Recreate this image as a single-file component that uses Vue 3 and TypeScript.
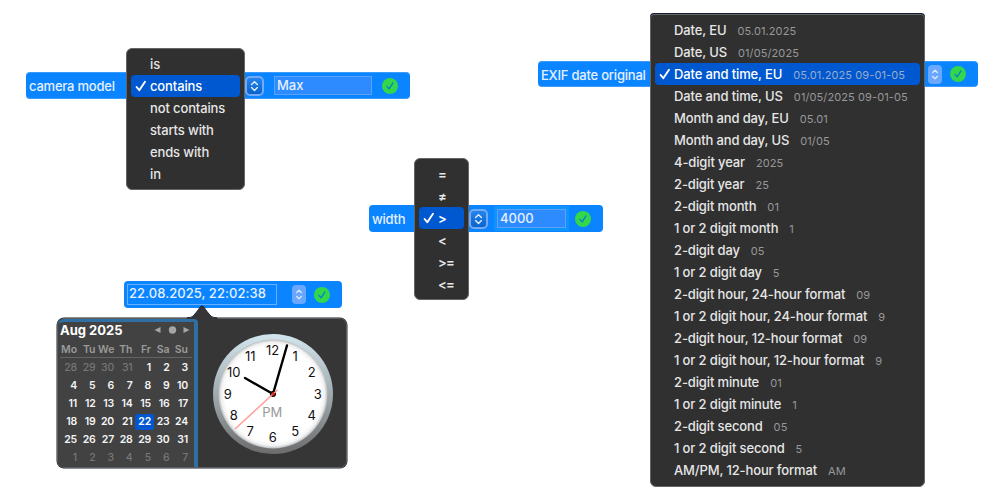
<script setup lang="ts">
interface MenuItem {
  label: string
  sample?: string
  checked?: boolean
}

interface Numeral {
  value: number
  x: number
  y: number
}

const matchItems: MenuItem[] = [
  { label: 'is' },
  { label: 'contains', checked: true },
  { label: 'not contains' },
  { label: 'starts with' },
  { label: 'ends with' },
  { label: 'in' },
]

const compareItems: MenuItem[] = [
  { label: '=' },
  { label: '≠' },
  { label: '>', checked: true },
  { label: '<' },
  { label: '>=' },
  { label: '<=' },
]

const formatItems: MenuItem[] = [
  { label: 'Date, EU', sample: '05.01.2025' },
  { label: 'Date, US', sample: '01/05/2025' },
  { label: 'Date and time, EU', sample: '05.01.2025 09-01-05', checked: true },
  { label: 'Date and time, US', sample: '01/05/2025 09-01-05' },
  { label: 'Month and day, EU', sample: '05.01' },
  { label: 'Month and day, US', sample: '01/05' },
  { label: '4-digit year', sample: '2025' },
  { label: '2-digit year', sample: '25' },
  { label: '2-digit month', sample: '01' },
  { label: '1 or 2 digit month', sample: '1' },
  { label: '2-digit day', sample: '05' },
  { label: '1 or 2 digit day', sample: '5' },
  { label: '2-digit hour, 24-hour format', sample: '09' },
  { label: '1 or 2 digit hour, 24-hour format', sample: '9' },
  { label: '2-digit hour, 12-hour format', sample: '09' },
  { label: '1 or 2 digit hour, 12-hour format', sample: '9' },
  { label: '2-digit minute', sample: '01' },
  { label: '1 or 2 digit minute', sample: '1' },
  { label: '2-digit second', sample: '05' },
  { label: '1 or 2 digit second', sample: '5' },
  { label: 'AM/PM, 12-hour format', sample: 'AM' },
]

const menus = [
  { name: 'match', items: matchItems },
  { name: 'compare', items: compareItems },
  { name: 'format', items: formatItems },
]

const weekdays: string[] = ['Mo', 'Tu', 'We', 'Th', 'Fr', 'Sa', 'Su']

// Six weeks starting on Monday, July 28
const days = Array.from({ length: 42 }, (_, i) => {
  const date = new Date(2025, 6, 28 + i)
  return {
    day: date.getDate(),
    outside: date.getMonth() !== 7,
    selected: date.getMonth() === 7 && date.getDate() === 22,
  }
})

const numerals: Numeral[] = Array.from({ length: 12 }, (_, i) => {
  const angle = ((i + 1) * Math.PI) / 6
  return { value: i + 1, x: 59.7 + 45 * Math.sin(angle), y: 60 - 43.2 * Math.cos(angle) + 4.6 }
})
</script>

<template>
  <main class="canvas">
    <section class="bar bar-model">
      <span class="bar-label">camera model</span>
      <span class="chooser"><svg viewBox="0 0 18 18"><path d="M5.5 7.3 9 3.8l3.5 3.500M5.500 10.900l3.500 3.500 3.500-3.500" /></svg></span>
      <span class="field">Max</span>
      <svg class="ok" viewBox="0 0 16 16"><circle cx="8" cy="8" r="8" /><path d="m4.9 8.3 2.2 2.6 3.9-6" /></svg>
    </section>

    <section class="bar bar-width">
      <span class="bar-label">width</span>
      <span class="chooser"><svg viewBox="0 0 18 18"><path d="M5.5 7.3 9 3.8l3.5 3.500M5.500 10.900l3.500 3.500 3.500-3.500" /></svg></span>
      <span class="field focused">4000</span>
      <svg class="ok" viewBox="0 0 16 16"><circle cx="8" cy="8" r="8" /><path d="m4.9 8.3 2.2 2.6 3.9-6" /></svg>
    </section>

    <section class="bar bar-exif">
      <span class="bar-label">EXIF date original</span>
      <span class="stepper"><svg viewBox="0 0 14 19"><path d="M4.7 7.5 7 5.2l2.3 2.3M4.7 11.500 7 13.800l2.300-2.300" /></svg></span>
      <svg class="ok" viewBox="0 0 16 16"><circle cx="8" cy="8" r="8" /><path d="m4.9 8.3 2.2 2.6 3.9-6" /></svg>
    </section>

    <section class="bar bar-date">
      <span class="date-field">22.08.2025, 22:02:38</span>
      <span class="stepper"><svg viewBox="0 0 14 19"><path d="M4.7 7.5 7 5.2l2.3 2.3M4.7 11.500 7 13.800l2.300-2.300" /></svg></span>
      <svg class="ok" viewBox="0 0 16 16"><circle cx="8" cy="8" r="8" /><path d="m4.9 8.3 2.2 2.6 3.9-6" /></svg>
    </section>

    <ul v-for="menu in menus" :key="menu.name" class="menu" :class="`menu-${menu.name}`">
      <li v-for="item in menu.items" :key="item.label" class="item" :class="{ checked: item.checked }">
        <span class="mark">
          <svg v-if="item.checked" viewBox="0 0 12 12"><path d="M1.6 7 4.3 10.2 10 1.7" /></svg>
        </span>
        <span class="label">{{ item.label }}</span>
        <span v-if="item.sample" class="sample">{{ item.sample }}</span>
      </li>
    </ul>

    <section class="popover">
      <svg class="arrow" viewBox="0 0 32 14">
        <path class="arrow-fill" d="M0 13.5C7 13.5 8 10 11 6.5 13.5 3.5 14 1 16 1s2.5 2.5 5 5.5C24 10 25 13.5 32 13.5V14H0Z" />
        <path class="arrow-line" d="M1 12.8C7 12.8 8 10 11 6.5 13.5 3.5 14 1 16 1s2.5 2.5 5 5.5C24 10 25 12.8 31 12.8" />
      </svg>
      <div class="calendar">
        <header class="cal-head">
          <span class="month">Aug 2025</span>
          <svg class="nav" viewBox="0 0 36 8">
            <path d="M6.5 1v6L.5 4ZM29.5 1v6l6-3Z" />
            <circle cx="18.5" cy="4" r="3.7" />
          </svg>
        </header>
        <div class="grid weekdays">
          <span v-for="name in weekdays" :key="name">{{ name }}</span>
        </div>
        <div class="grid days">
          <span v-for="(d, i) in days" :key="i" :class="{ outside: d.outside, selected: d.selected }">{{ d.day }}</span>
        </div>
      </div>
      <div class="clock-pane">
        <svg class="clock" viewBox="0 0 120 120">
          <defs>
            <linearGradient id="rim" x1="0" y1="0" x2="0" y2="1">
              <stop offset="0" stop-color="#d3e6ee" />
              <stop offset="0.5" stop-color="#a0abb0" />
              <stop offset="1" stop-color="#6c6c6c" />
            </linearGradient>
            <radialGradient id="face">
              <stop offset="0.88" stop-color="#ffffff" />
              <stop offset="0.95" stop-color="#f1f1f1" />
              <stop offset="1" stop-color="#b9bcbe" />
            </radialGradient>
          </defs>
          <circle cx="60" cy="60" r="60" fill="url(#rim)" />
          <circle cx="60" cy="60" r="54.5" fill="url(#face)" />
          <text v-for="n in numerals" :key="n.value" class="numeral" :x="n.x" :y="n.y">{{ n.value }}</text>
          <text class="meridiem" x="59.3" y="83.3">PM</text>
          <path class="hand" d="M60 60 32 44" />
          <path class="hand" d="M60 60 74 11.5" />
          <circle cx="60" cy="60" r="3" fill="#000" />
          <path class="second" d="M64.5 56 22 95" />
          <circle cx="60" cy="60" r="1.8" fill="#e22c1c" />
        </svg>
      </div>
    </section>
  </main>
</template>

<style>
body {
  margin: 0;
  background: #fff;
}
</style>

<style scoped>
.canvas {
  position: relative;
  width: 1000px;
  height: 500px;
  overflow: hidden;
  background: #fff;
  font-family: Inter, "Liberation Sans", sans-serif;
  font-size: 13px;
  font-weight: 500;
}

.bar {
  position: absolute;
  display: flex;
  align-items: center;
  box-sizing: border-box;
  height: 27px;
  border-radius: 4px;
  background: #0a84ff;
  color: #e6f0ff;
  white-space: nowrap;
}

.bar-label { flex: none; letter-spacing: -0.22px; }

.bar-model {
  left: 26px;
  top: 72px;
  width: 384px;
  padding-left: 3px;
  border: 1px solid #3b9bff;
  border-left: 0;
  border-right: 0;
}
.bar-model .bar-label { width: 216px; padding-top: 1px; }
.bar-model .field { width: 98px; margin-left: 10px; }
.bar-model .ok { margin-left: 10px; }

.bar-width { left: 369px; top: 205px; width: 234px; padding-left: 3px; }
.bar-width .bar-label { width: 97px; }
.bar-width .field { width: 69px; margin-left: 9px; }
.bar-width .ok { margin-left: 9px; }

.bar-exif { left: 538px; top: 61px; width: 440px; height: 26px; padding-left: 3px; border: 1px solid #3b9bff; border-left: 0; border-right: 0; }
.bar-exif .bar-label { width: 387px; padding-top: 1px; }
.bar-exif .ok { margin-left: 8px; }

.bar-date { left: 124px; top: 281px; width: 218px; padding-left: 3px; }
.bar-date .stepper { margin-left: 15px; }
.bar-date .ok { margin-left: 8px; }

.chooser {
  flex: none;
  box-sizing: border-box;
  width: 19px;
  height: 20px;
  border: 2px solid #73a9f6;
  border-radius: 5px;
  background: linear-gradient(#2484ee, #0a63cc);
}
.chooser svg { display: block; width: 15px; height: 16px; }
.chooser path, .stepper path {
  fill: none;
  stroke: #e8f2ff;
  stroke-width: 1.6;
  stroke-linecap: round;
  stroke-linejoin: round;
}
.stepper path { stroke: #d8e8ff; stroke-width: 1.4; }

.stepper {
  flex: none;
  width: 14px;
  height: 19px;
  border-radius: 4px;
  background: #6aa7ff;
}
.stepper svg { display: block; width: 14px; height: 19px; }

.field {
  flex: none;
  box-sizing: border-box;
  height: 19px;
  padding-left: 2px;
  border: 1px solid #5ba2fb;
  background: #2d8bff;
  line-height: 17px;
}
.field.focused { box-shadow: 0 0 0 3px #0f93ff; }

.date-field {
  flex: none;
  box-sizing: border-box;
  width: 150px;
  height: 21px;
  padding-left: 1px;
  border: 1px solid #68afff;
  line-height: 17px;
  letter-spacing: 0.05px;
}

.ok { flex: none; width: 16px; height: 16px; }
.ok circle { fill: #32d74b; }
.ok path {
  fill: none;
  stroke: #0a78d8;
  stroke-width: 1.2;
  stroke-linecap: round;
  stroke-linejoin: round;
}

.menu {
  position: absolute;
  box-sizing: border-box;
  margin: 0;
  padding: 4px;
  border: 1px solid #656565;
  border-radius: 6px;
  background: #303030;
  list-style: none;
  color: #e6e6e6;
}
.menu-match { left: 126px; top: 48px; width: 119px; }
.menu-compare { left: 414px; top: 158px; width: 55px; }
.menu-format {
  left: 650px;
  top: 14px;
  width: 275px;
  padding-bottom: 5px;
  box-shadow: 0 -1px 0 #101d35;
  border-top-left-radius: 4px;
  border-top-right-radius: 4px;
}

.item {
  display: flex;
  align-items: center;
  height: 22px;
  border-radius: 4px;
  line-height: 21px;
  white-space: nowrap;
}
.item.checked { background: #0058d0; color: #fff; }
.mark { flex: none; width: 15px; height: 12px; padding-left: 4px; }
.mark svg { display: block; width: 12px; height: 12px; }
.mark path {
  fill: none;
  stroke: #fff;
  stroke-width: 1.9;
  stroke-linecap: round;
  stroke-linejoin: round;
}
.label { padding-top: 1px; letter-spacing: -0.13px; }
.menu-compare .label { letter-spacing: -0.8px; font-weight: 600; }
.sample {
  margin-left: 11px;
  padding-top: 2px;
  color: #98989a;
  font-size: 11px;
  font-weight: 400;
  letter-spacing: 0.1px;
}
.checked .sample { color: #9cacc8; }

.popover {
  position: absolute;
  left: 57px;
  top: 318px;
  display: flex;
  box-sizing: border-box;
  width: 290px;
  height: 150px;
  border: 1px solid #5b5d60;
  border-radius: 7px;
  background: #363636;
  box-shadow: 0 0 0 0.5px #1b2433;
}
.arrow {
  position: absolute;
  left: 128px;
  top: -14px;
  width: 32px;
  height: 14px;
}
.arrow-fill { fill: #363636; }
.arrow-line { fill: none; stroke: #172338; stroke-width: 1; }

.calendar {
  flex: none;
  box-sizing: border-box;
  width: 140px;
  height: 148px;
  padding-left: 1px;
  border-top: 3px solid #2f6fa3;
  border-right: 4px solid #2f6fa3;
  border-radius: 6px 4px 0 6px;
  background: #424242;
}
.cal-head {
  display: flex;
  justify-content: space-between;
  align-items: center;
  height: 16px;
  padding: 0 4px 3px 1px;
}
.month { color: #fff; font-size: 13px; font-weight: 700; }
.nav { width: 36px; height: 8px; fill: #a5a5a5; }

.grid {
  display: grid;
  grid-template-columns: repeat(7, 18.5px);
  margin-left: 2px;
  font-size: 10.5px;
  font-weight: 600;
  text-align: right;
}
.grid span { box-sizing: border-box; padding-right: 2.5px; }
.weekdays {
  width: 131px;
  height: 16px;
  margin-left: 1px;
  padding-left: 1px;
  box-sizing: content-box;
  border-bottom: 1px solid #646464;
  color: #9a9a9a;
  line-height: 17px;
}
.days { color: #f4f4f4; line-height: 16px; row-gap: 2px; margin-top: 2px; letter-spacing: -0.2px; }
.days span { height: 16px; }
.days .outside { color: #767676; font-weight: 500; }
.days .selected { border-radius: 2px; background: #0058d0; color: #fff; }

.clock-pane { display: flex; padding: 15px 0 0 15px; }
.clock { width: 120px; height: 120px; }
.numeral, .meridiem { text-anchor: middle; font-weight: 400; font-size: 13px; fill: #111; }
.meridiem { fill: #999; }
.hand { stroke: #000; stroke-width: 2.4; stroke-linecap: round; }
.second { stroke: #ff9d96; stroke-width: 1.5; }
</style>
